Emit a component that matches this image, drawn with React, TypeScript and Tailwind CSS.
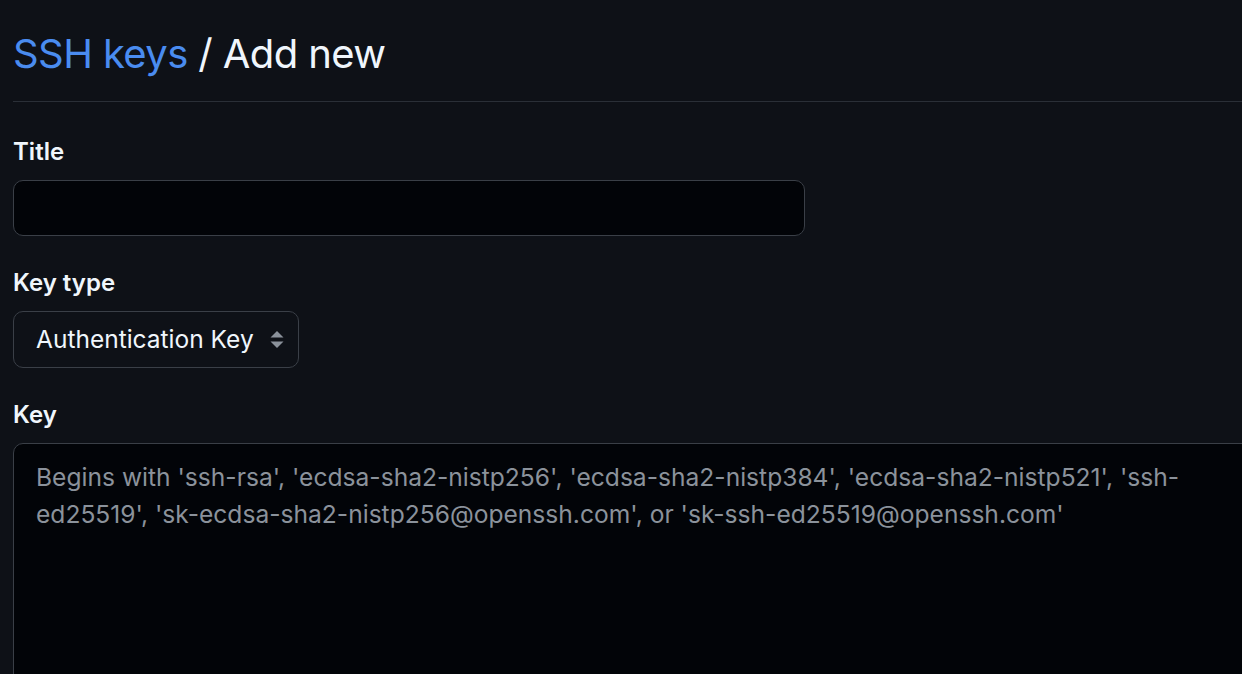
import React from 'react'

const keyPlaceholder =
  "Begins with 'ssh-rsa', 'ecdsa-sha2-nistp256', 'ecdsa-sha2-nistp384', 'ecdsa-sha2-nistp521', 'ssh-\ned25519', 'sk-ecdsa-sha2-nistp256@openssh.com', or 'sk-ssh-ed25519@openssh.com'"

const App = () => {
  return (
    <div
      className="h-[674px] w-full overflow-hidden bg-[#0e1117] text-[#f0f6fc]"
      style={{ fontFamily: 'Inter, "Noto Sans", sans-serif' }}
    >
      <div className="w-[1400px] pl-[13px]">
        <div className="pt-[29px] pb-[22px] border-b border-[#2a2f37]">
          <h2 className="text-[40px] leading-[50px] font-normal tracking-[-0.6px]">
            <a href="#" className="text-[#4a8cf0]">
              SSH keys
            </a>{' '}
            / Add new
          </h2>
        </div>

        <form className="pt-[35px]">
          <label htmlFor="title" className="block text-[24px] leading-[30px] font-semibold">
            Title
          </label>
          <input
            id="title"
            type="text"
            className="mt-[13px] block w-[792px] h-[56px] rounded-[10px] border border-[#3a3f47] bg-[#020408] px-[22px] text-[24px] outline-none"
          />

          <div className="mt-[32px]">
            <label htmlFor="keytype" className="block text-[24px] leading-[30px] font-semibold">
              Key type
            </label>
            <div className="relative mt-[13px] w-[286px]">
              <select
                id="keytype"
                className="block w-full h-[57px] appearance-none rounded-[10px] border border-[#3a3f47] bg-[#0e1117] pl-[22px] pr-[40px] text-[24.5px] text-[#f0f6fc] outline-none"
              >
                <option>Authentication Key</option>
                <option>Signing Key</option>
              </select>
              <svg
                className="pointer-events-none absolute right-[15px] top-[20px]"
                width="14"
                height="17"
                viewBox="0 0 14 17"
              >
                <path d="M7 0 L13.5 6.5 L0.5 6.5 Z" fill="#8b929b" />
                <path d="M7 17 L13.5 10.5 L0.5 10.5 Z" fill="#8b929b" />
              </svg>
            </div>
          </div>

          <div className="mt-[32px]">
            <label htmlFor="key" className="block text-[24px] leading-[30px] font-semibold">
              Key
            </label>
            <textarea
              id="key"
              placeholder={keyPlaceholder}
              className="mt-[13px] block w-[1380px] h-[300px] resize-none rounded-[10px] border border-[#3a3f47] bg-[#020408] px-[22px] py-[15px] text-[24.6px] leading-[37px] text-[#f0f6fc] placeholder:text-[#8b929b] outline-none"
            />
          </div>
        </form>
      </div>
    </div>
  )
}

export default App
